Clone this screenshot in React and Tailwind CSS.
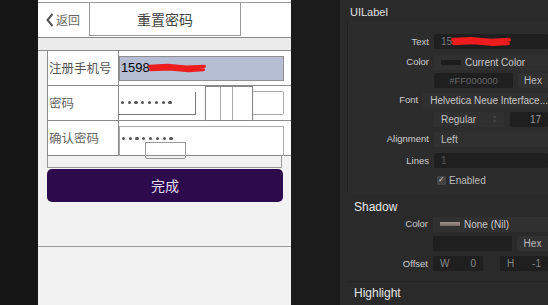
import React from 'react';

const cjk = { fontFamily: '"Noto Sans CJK SC", "Liberation Sans", sans-serif' };
const mac = { fontFamily: '"Liberation Sans", Arial, sans-serif' };

const Scribble = ({ className }) => (
    <svg className={className} viewBox="0 0 60 12" preserveAspectRatio="none">
        <path d="M2 4 L20 3 L40 5 L58 4 M3 8 L22 7 L42 9 L57 8 M4 6 L56 6" stroke="#ee1c1c" strokeWidth="4" strokeLinecap="round" fill="none" />
    </svg>
);

const Dots = () => (
    <span className="flex gap-[3.6px]">
        {[0, 1, 2, 3, 4, 5, 6, 7].map(i => (
            <span key={i} className="h-[3.2px] w-[3.2px] rounded-full bg-[#555]" />
        ))}
    </span>
);

const Row = ({ label, children, className = '' }) => (
    <div className={`flex items-center ${className}`}>
        <div className="w-[86px] pr-[5px] text-right text-[9.5px] text-[#cfcfcf]">{label}</div>
        <div className="flex flex-1 items-center">{children}</div>
    </div>
);

const Dark = ({ children, className = '' }) => (
    <div className={`flex h-full items-center rounded-[2px] bg-[#1f1f1f] px-[7px] text-[10px] ${className}`}>{children}</div>
);

const HexRow = ({ value }) => (
    <div className="flex h-full w-full gap-[5px]">
        <div className="flex w-[79px] items-center justify-center rounded-[2px] bg-[#1f1f1f] text-[9.5px] text-[#666]">{value}</div>
        <div className="flex flex-1 items-center justify-center rounded-l-[2px] bg-[#313131] text-[10px] text-[#bdbdbd]">Hex</div>
    </div>
);

const Phone = () => (
    <div className="relative flex w-[254px] flex-col bg-[#f2f2f2]" style={cjk}>
        <div className="h-[3px] border-b border-[#9a9a9a] bg-white" />
        <div className="flex h-[35px] border-b border-[#8a8a8a] bg-white">
            <div className="flex w-[51px] items-center gap-[2px] pl-[8px] text-[#666]">
                <svg width="8" height="14" viewBox="0 0 8 14">
                    <path d="M6.5 1 L1.5 7 L6.5 13" stroke="#555" strokeWidth="2" fill="none" />
                </svg>
                <span className="text-[12px]">返回</span>
            </div>
            <div className="flex h-[33px] w-[152px] items-center justify-center border border-t-0 border-[#9a9a9a] text-[14px] text-[#444]">
                重置密码
            </div>
        </div>
        <div className="h-[13px] border-b border-[#8a8a8a] bg-[#ebebeb]" />

        <div className="ml-[9px] flex h-[35px] border-b border-l border-[#8a8a8a] bg-white">
            <div className="flex w-[71px] items-center border-r border-[#8a8a8a] pl-[1px] text-[12.5px] text-[#555]">注册手机号</div>
            <div className="flex h-[25px] w-[165px] self-center items-center border border-[#8f8f8f] bg-[#b6bed3] pl-[1px] text-[13px] text-black" style={mac}>
                1598
                <Scribble className="ml-[-2px] h-[10px] w-[58px]" />
            </div>
        </div>

        <div className="relative ml-[9px] flex h-[35px] border-b border-l border-[#8a8a8a] bg-white">
            <div className="flex w-[71px] items-center border-r border-[#8a8a8a] pl-[1px] text-[12.5px] text-[#666]">密码</div>
            <div className="flex h-[23px] w-[77px] self-center items-center border-r border-b border-[#777] pl-[2px]">
                <Dots />
            </div>
            <div className="ml-[9px] flex h-[35px] w-[48px] border border-[#888] shadow-[0_1px_1px_#bbb]">
                <div className="w-[15px] border-r border-[#aaa]" />
                <div className="w-[12px] border-r border-[#aaa]" />
            </div>
            <div className="h-[24px] w-[31px] self-center rounded-r-[2px] border border-l-0 border-[#aaa]" />
        </div>

        <div className="relative ml-[9px] flex h-[35px] border-b border-l border-[#8a8a8a] bg-white">
            <div className="flex w-[71px] items-center border-r border-[#8a8a8a] pl-[1px] text-[12.5px] text-[#666]">确认密码</div>
            <div className="mt-[5px] flex h-[30px] w-[165px] items-start border border-b-0 border-[#aaa] pl-[2px] pt-[10px]">
                <Dots />
            </div>
            <div className="absolute left-[97px] top-[21px] h-[17px] w-[41px] rounded-b-[2px] border border-[#999]" />
        </div>

        <div className="ml-[9px] mr-[9px] h-[12px] border-b border-l border-r border-[#999]" />
        <div className="ml-[9px] mt-[1px] flex h-[33px] w-[236px] items-center justify-center rounded-[5px] bg-[#2d0a4b] text-[14px] text-[#e4daf2]">
            完成
        </div>
        <div className="mt-[44px] border-b border-[#9a9a9a]" />
    </div>
);

const Panel = () => (
    <div className="flex w-[208px] flex-col bg-[#2a2a2a] text-[#cfcfcf]" style={mac}>
        <div className="flex h-[23px] items-center pl-[10px] pt-[3px] text-[11px] text-[#e0e0e0]">UILabel</div>
        <div className="ml-[7px] flex flex-col border-l border-[#232323] bg-[#2c2c2c] pb-[7px] pt-[11px]">
            <Row label="Text" className="h-[17px]">
                <Dark className="w-full text-[#777]">
                    15<Scribble className="ml-[-1px] h-[11px] w-[60px]" />
                </Dark>
            </Row>
            <Row label="Color" className="mt-[3px] h-[18px]">
                <div className="flex h-full w-full items-center gap-[4px] bg-[#303030] pl-[7px] text-[10px] text-[#c8c8c8]">
                    <div className="h-[5px] w-[20px] bg-[#1c1c1c]" />
                    Current Color
                </div>
            </Row>
            <Row label="" className="mt-[1px] h-[17px]">
                <HexRow value="#FF000000" />
            </Row>
            <Row label="Font" className="mt-[2px] h-[18px]">
                <div className="flex h-full w-full items-center bg-[#303030] pl-[7px] text-[10px] whitespace-nowrap text-[#c8c8c8]">
                    Helvetica Neue Interface...
                </div>
            </Row>
            <Row label="" className="mt-[2px] h-[16px]">
                <div className="flex h-full w-full gap-[6px]">
                    <div className="flex w-[70px] items-center justify-between bg-[#303030] px-[7px] text-[10px] text-[#c0c0c0]">
                        Regular<span className="text-[5px] leading-none text-[#4a4a4a]">▲<br />▼</span>
                    </div>
                    <Dark className="flex-1 justify-end text-[#999]">17</Dark>
                </div>
            </Row>
            <Row label="Alignment" className="mt-[4px] h-[16px]">
                <div className="flex h-full w-full items-center bg-[#303030] pl-[7px] text-[10px] text-[#c0c0c0]">Left</div>
            </Row>
            <Row label="Lines" className="mt-[5px] h-[17px]">
                <Dark className="w-full text-[#555]">1</Dark>
            </Row>
            <Row label="" className="mt-[5px] h-[12px]">
                <div className="flex items-center gap-[3px] pl-[3px] text-[10px] text-[#bbb]">
                    <div className="flex h-[9px] w-[9px] items-center justify-center rounded-[1px] bg-[#444] text-[8px] leading-none text-[#ddd]">✓</div>
                    Enabled
                </div>
            </Row>
        </div>
        <div className="flex h-[23px] items-end pl-[14px] text-[12px] text-[#e6e6e6]">Shadow</div>
        <div className="ml-[7px] flex flex-col border-b border-[#252525] pb-[9px]">
            <Row label="Color" className="h-[17px]">
                <div className="flex h-full w-full items-center gap-[4px] bg-[#303030] pl-[7px] text-[10px] text-[#c8c8c8]">
                    <div className="h-[4px] w-[20px] bg-gradient-to-b from-[#a09090] to-[#7a6a6a]" />
                    None (Nil)
                </div>
            </Row>
            <Row label="" className="mt-[2px] h-[17px]">
                <HexRow value="" />
            </Row>
            <Row label="Offset" className="mt-[4px] h-[16px]">
                <div className="flex h-full w-full items-center">
                    <Dark className="w-[50px] justify-between text-[#888]"><span>W</span><span>0</span></Dark>
                    <div className="ml-[3px] flex h-full w-[6px] flex-col gap-[1px]">
                        <div className="flex-1 rounded-t-[2px] bg-[#3a3a3a]" />
                        <div className="flex-1 rounded-b-[2px] bg-[#3a3a3a]" />
                    </div>
                    <Dark className="ml-[8px] flex-1 justify-between text-[#888]"><span>H</span><span>-1</span></Dark>
                </div>
            </Row>
        </div>
        <div className="flex h-[24px] items-center pl-[14px] text-[12px] text-[#e6e6e6]">Highlight</div>
    </div>
);

export default function App() {
    return (
        <div className="flex h-[305px] w-[548px] overflow-hidden bg-[#1a1a1a]">
            <div className="w-[38px] bg-[#161616]" />
            <Phone />
            <div className="w-[49px] bg-[#1b1b1b]" />
            <Panel />
        </div>
    );
}
